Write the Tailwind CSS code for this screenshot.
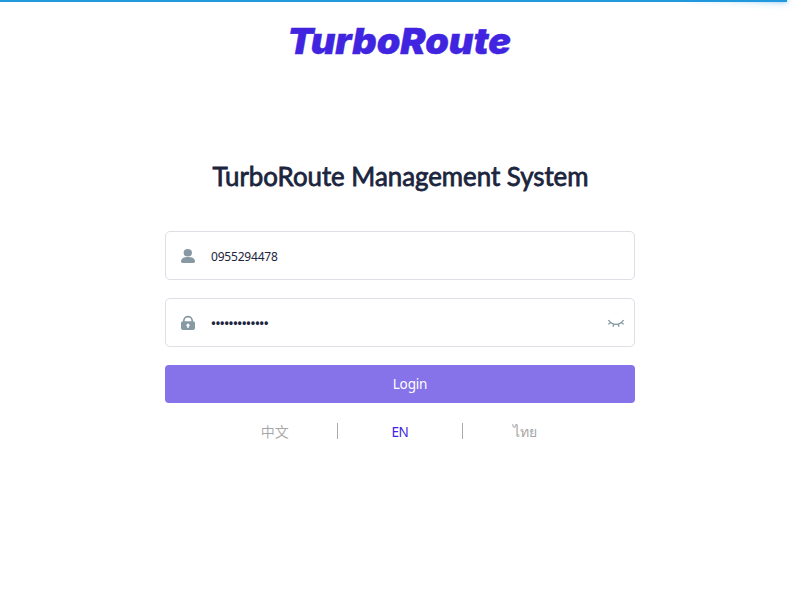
<!DOCTYPE html>
<html lang="en">
<head>
<meta charset="utf-8">
<title>TurboRoute Management System</title>
<script src="https://cdn.jsdelivr.net/npm/@tailwindcss/browser@4"></script>
</head>
<body class="h-[600px] overflow-hidden bg-white font-['Noto_Sans','Noto_Sans_CJK_SC',sans-serif]">
<div class="absolute left-0 top-0 h-[2px] w-[787px] overflow-visible bg-[#2299dd]">
  <div class="absolute right-0 top-0 h-full w-[100px] rotate-3 -translate-y-1 shadow-[0_0_10px_#2299dd,0_0_5px_#2299dd]"></div>
</div>
<main class="mx-auto flex w-[470px] flex-col">
  <header class="flex h-[82px] justify-center">
    <svg class="h-[82px] w-[240px]" viewBox="0 0 240 82" role="img" aria-label="TurboRoute">
      <text x="7.500" y="54.200" textLength="223.500" lengthAdjust="spacingAndGlyphs" class="fill-[#4024df] stroke-[#4024df] stroke-[0.4px] font-['Inter'] text-[36px] font-black italic">TurboRoute</text>
    </svg>
  </header>
  <h1 class="mt-[77px] flex h-[36px] justify-center">
    <svg class="h-[36px] w-[400px] overflow-visible" viewBox="0 0 400 36"><text x="12.500" y="27" textLength="376" lengthAdjust="spacingAndGlyphs" class="fill-[#1b253d] stroke-[#1b253d] stroke-[0.8px] font-['Lato'] text-[26.5px] font-normal">TurboRoute Management System</text></svg>
  </h1>
  <form class="mt-[36px] flex flex-col">
    <label class="flex h-[49px] items-center rounded-[5px] border border-[#dcdfe6] pl-[14px]">
      <svg class="size-4" viewBox="0 0 16 16" fill="#8799a3"><ellipse cx="7.800" cy="4.700" rx="4.200" ry="3.800"/><path d="M1 13.200C1 10.500 4 9 8 9s7 1.500 7 4.200q0 1.800-1.500 1.800h-11Q1 15 1 13.200Z"/></svg>
      <span class="relative top-px ml-[15px] text-[12px] tracking-[-0.2px] text-[#1b253d]">0955294478</span>
    </label>
    <label class="mt-[18px] flex h-[49px] items-center rounded-[5px] border border-[#dcdfe6] pl-[14px] pr-[10px]">
      <svg class="size-4" viewBox="0 0 16 16"><path d="M3.800 7V5.800a4.200 4.200 0 0 1 8.400 0V7" fill="none" stroke="#8799a3" stroke-width="1.700"/><path fill="#8799a3" fill-rule="evenodd" d="M3 6.300h10q2 0 2 1.800v5q0 1.900-2 1.900H3q-2 0-2-1.900v-5q0-1.800 2-1.800Zm4.300 5.500V13h1.400v-1.200a1.600 1.600 0 1 0-1.400 0Z"/></svg>
      <span class="relative top-px ml-[15px] text-[13px] font-semibold tracking-[-0.5px] text-[#1b253d]">•••••••••••••</span>
      <svg class="ml-auto h-4 w-4" viewBox="0 0 16 16" fill="none" stroke="#8799a3" stroke-width="1.300"><path d="M.5 5q3 4.300 7.500 4.300T15.500 5M.3 9.300l2.900-2M15.700 9.300l-2.900-2M5.700 9.200 5 11.700M10.300 9.200l.7 2.500"/></svg>
    </label>
    <button type="button" class="mt-[18px] flex h-[38px] items-center justify-center rounded-[4px] bg-[#8672e9] pl-5 pt-px text-[13.5px] tracking-[-0.15px] text-white">Login</button>
  </form>
  <nav class="mx-auto mt-[18px] flex h-[21px] w-[375px] items-center text-[14px] leading-[21px] text-[#a6a6a6]">
    <span class="flex-1 text-center font-['Noto_Sans_CJK_SC'] font-[350]">中文</span>
    <i class="relative -top-px h-4 w-px bg-[#aaaaaa]"></i>
    <span class="flex-1 pt-0.5 text-center text-[13.5px] tracking-[-0.3px] text-[#4024df]">EN</span>
    <i class="relative -top-px h-4 w-px bg-[#aaaaaa]"></i>
    <span class="flex-1 text-center">ไทย</span>
  </nav>
</main>
</body>
</html>
